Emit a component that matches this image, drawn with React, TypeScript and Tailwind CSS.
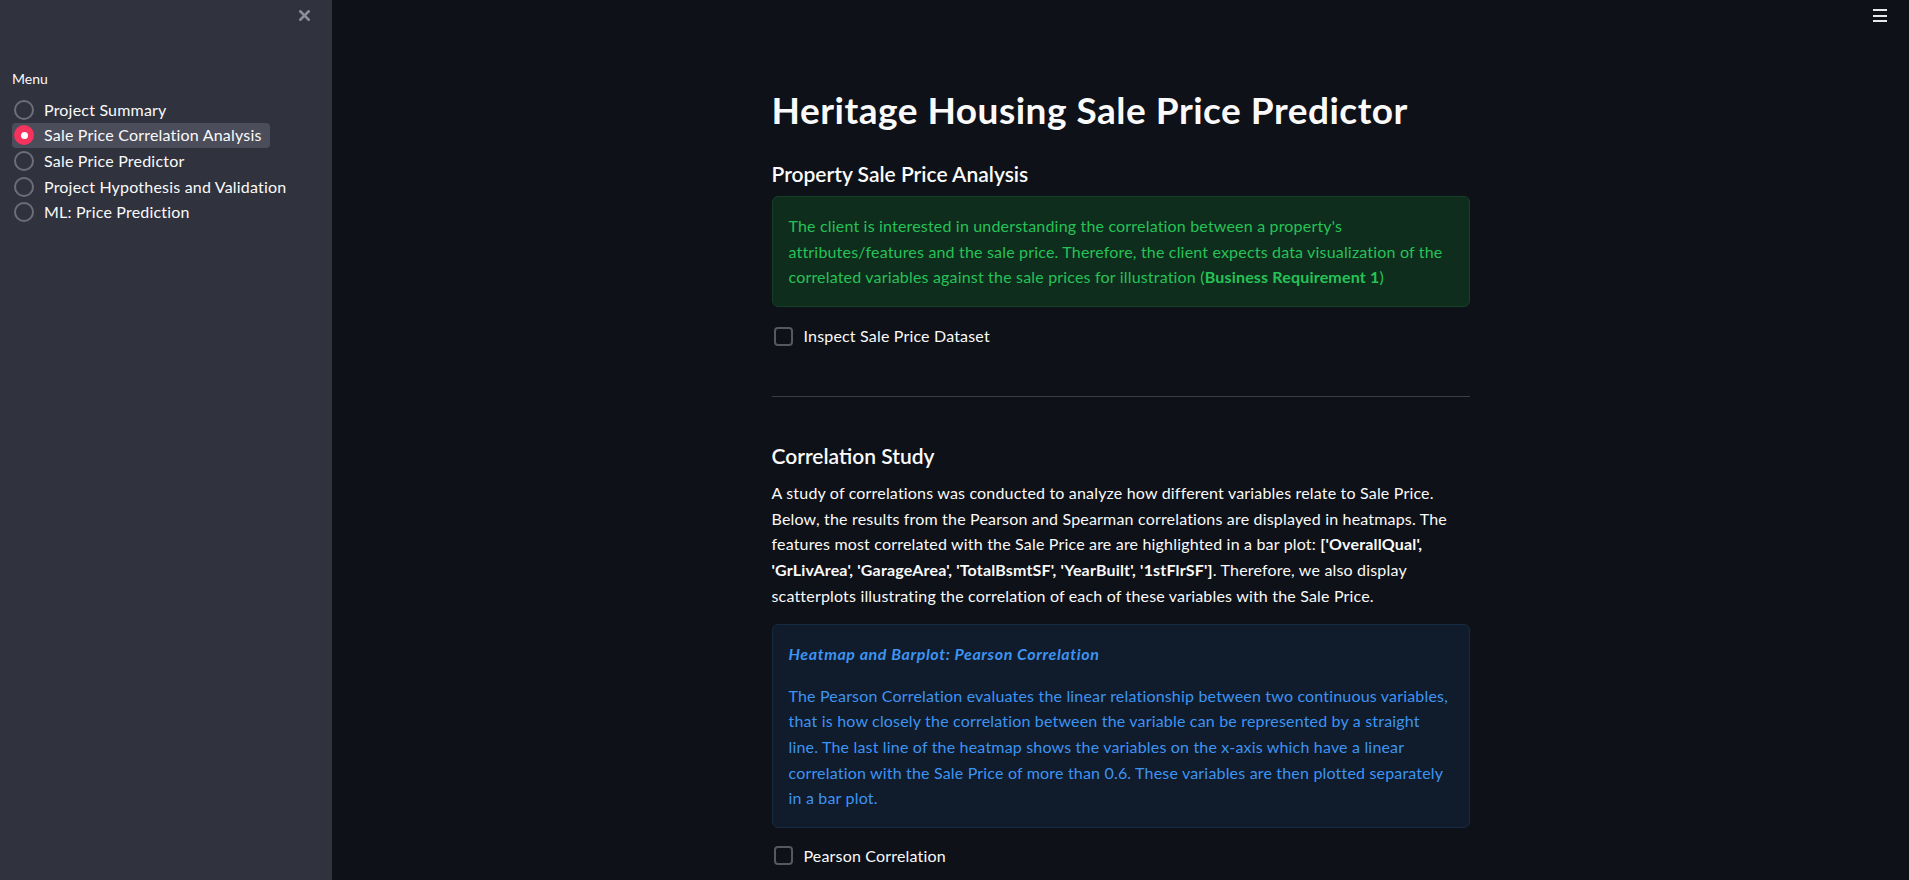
import React from "react";
import { X } from "lucide-react";

const menu = [
  "Project Summary",
  "Sale Price Correlation Analysis",
  "Sale Price Predictor",
  "Project Hypothesis and Validation",
  "ML: Price Prediction",
];

function Checkbox({ label }: { label: string }) {
  return (
    <label className="flex items-center h-[24px] gap-[11px] pl-[2px]">
      <span className="w-[19px] h-[19px] rounded-[4px] border-2 border-[#565862] box-border" />
      <span className="text-[16px] text-[#fafafa] leading-[24px] tracking-[0.18px]">{label}</span>
    </label>
  );
}

export default function App() {
  return (
    <div className="flex w-[1909px] h-[880px] overflow-hidden font-['Lato',sans-serif]">
      <aside className="w-[332px] shrink-0 bg-[#30323e] relative">
        <div className="absolute left-[296px] top-[7px] text-[#8c8d96]">
          <X size={17} strokeWidth={3.5} />
        </div>
        <div className="pt-[68px] pl-[12px]">
          <div className="text-[14px] leading-[21px] text-[#fafafa]">Menu</div>
          <div className="mt-[8px] flex flex-col items-start">
            {menu.map((m, i) => {
              const sel = i === 1;
              return (
                <div
                  key={m}
                  className={
                    sel
                      ? "flex items-center h-[25.6px] pl-[2px] pr-[8px] gap-[10px] rounded-[4px] bg-[#4b4d5a]"
                      : "flex items-center h-[25.6px] pl-[2px] pr-[8px] gap-[10px]"
                  }
                >
                  {sel ? (
                    <span className="w-[20px] h-[20px] rounded-full bg-[#f6335c] flex items-center justify-center">
                      <span className="w-[7px] h-[7px] rounded-full bg-white" />
                    </span>
                  ) : (
                    <span className="w-[20px] h-[20px] rounded-full border-2 border-[#6c6e78] box-border" />
                  )}
                  <span className="text-[16px] text-[#fafafa] leading-[24px] tracking-[0.2px] whitespace-nowrap">
                    {m}
                  </span>
                </div>
              );
            })}
          </div>
        </div>
      </aside>
      <main className="flex-1 relative bg-[#0e1117] overflow-hidden">
        <div className="absolute right-[22px] top-[9px] flex flex-col gap-[3.5px]">
          <span className="block w-[14px] h-[2px] bg-[#e8e8ea]" />
          <span className="block w-[14px] h-[2px] bg-[#e8e8ea]" />
          <span className="block w-[14px] h-[2px] bg-[#e8e8ea]" />
        </div>
        <div className="w-[698px] mx-auto pt-[88px] text-[#fafafa]">
          <h1 className="text-[37px] font-bold leading-[43px] tracking-[0.5px]">
            Heritage Housing Sale Price Predictor
          </h1>
          <h3 className="mt-[30px] text-[21px] font-semibold leading-[1.25]">
            Property Sale Price Analysis
          </h3>
          <div className="mt-[9px] rounded-[6px] border border-[#163f27] bg-[#0e2d1d] p-4 text-[16px] leading-[1.6] tracking-[0.18px] text-[#27c257]">
            The client is interested in understanding the correlation between a property's
            attributes/features and the sale price. Therefore, the client expects data
            visualization of the correlated variables against the sale prices for illustration (
            <b className="font-bold">Business Requirement 1</b>)
          </div>
          <div className="mt-[17px]">
            <Checkbox label="Inspect Sale Price Dataset" />
          </div>
          <hr className="mt-[48px] border-0 h-[1px] bg-[#3b3e46]" />
          <h3 className="mt-[46px] text-[21px] font-semibold leading-[1.25]">Correlation Study</h3>
          <p className="mt-[11px] text-[16px] leading-[1.6] tracking-[0.18px]">
            A study of correlations was conducted to analyze how different variables relate to
            Sale Price. Below, the results from the Pearson and Spearman correlations are
            displayed in heatmaps. The features most correlated with the Sale Price are are
            highlighted in a bar plot:{" "}
            <b className="font-bold">
              ['OverallQual', 'GrLivArea', 'GarageArea', 'TotalBsmtSF', 'YearBuilt', '1stFlrSF']
            </b>
            . Therefore, we also display scatterplots illustrating the correlation of each of these
            variables with the Sale Price.
          </p>
          <div className="mt-[16px] rounded-[6px] border border-[#162a42] bg-[#101b2b] p-4 text-[16px] leading-[1.6] tracking-[0.18px] text-[#3d94f2]">
            <div className="font-bold italic tracking-[0.6px]">Heatmap and Barplot: Pearson Correlation</div>
            <p className="mt-[16px]">
              The Pearson Correlation evaluates the linear relationship between two continuous
              variables, that is how closely the correlation between the variable can be
              represented by a straight line. The last line of the heatmap shows the variables on
              the x-axis which have a linear correlation with the Sale Price of more than 0.6.
              These variables are then plotted separately in a bar plot.
            </p>
          </div>
          <div className="mt-[16px]">
            <Checkbox label="Pearson Correlation" />
          </div>
        </div>
      </main>
    </div>
  );
}
